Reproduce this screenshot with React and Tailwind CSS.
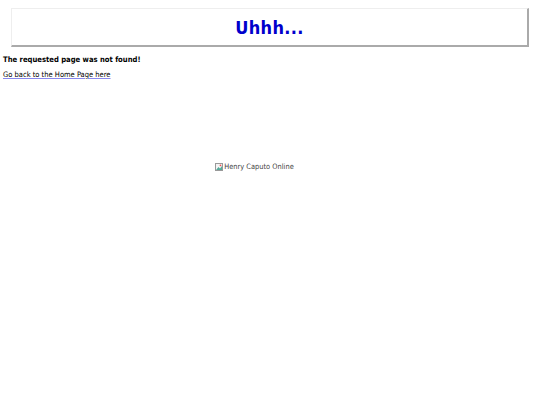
export default function App() {
  return (
    <div className="min-h-[405px] bg-white text-black" style={{ fontFamily: '"DejaVu Sans Condensed", "DejaVu Sans", Verdana, sans-serif' }}>
      <div className="pt-2 px-[11px] pr-[11px]">
        <div className="h-[39px] flex items-center justify-center bg-white border-t border-l border-t-[#eeeeee] border-l-[#eeeeee] border-r-2 border-b-2 border-r-[#aaaaaa] border-b-[#aaaaaa]">
          <h1 className="text-[18px] font-bold text-[#0000cc] tracking-[0.3px]">Uhhh...</h1>
        </div>
      </div>
      <p className="mt-[7px] pl-[3px] text-[7.6px] font-bold leading-[12px]">The requested page was not found!</p>
      <p className="mt-[3px] pl-[3px] text-[7.5px] leading-[12px]">
        <a href="#" className="text-black underline decoration-[#8888ee]">Go back to the Home Page here</a>
      </p>
      <div className="mt-[80px] flex justify-center pr-[31px]">
        <span className="inline-flex items-center gap-[1px] text-[7.4px] text-[#444]">
          <svg width="8" height="8" viewBox="0 0 8 8">
            <rect x="0.5" y="0.5" width="7" height="7" fill="#f4f4f4" stroke="#999" />
            <path d="M1 7 L3.5 4 L5 5.5 L7 3 L7 7 Z" fill="#5a9" />
            <circle cx="5.5" cy="2.3" r="0.9" fill="#e55" />
          </svg>
          Henry Caputo Online
        </span>
      </div>
    </div>
  )
}
